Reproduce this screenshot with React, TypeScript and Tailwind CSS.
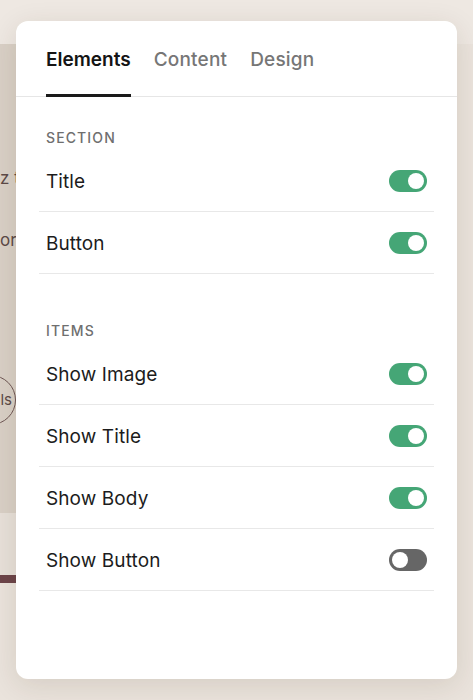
import { useState } from 'react';

type Row = { id: string; label: string; on: boolean };

const initialSections: { title: string; rows: Row[] }[] = [
  {
    title: 'Section',
    rows: [
      { id: 'title', label: 'Title', on: true },
      { id: 'button', label: 'Button', on: true },
    ],
  },
  {
    title: 'Items',
    rows: [
      { id: 'showImage', label: 'Show Image', on: true },
      { id: 'showTitle', label: 'Show Title', on: true },
      { id: 'showBody', label: 'Show Body', on: true },
      { id: 'showButton', label: 'Show Button', on: false },
    ],
  },
];

function Toggle({ on, onClick }: { on: boolean; onClick: () => void }) {
  return (
    <button
      type="button"
      onClick={onClick}
      className={`flex h-[22px] w-[38px] items-center rounded-full px-[3px] ${
        on ? 'justify-end bg-[#45a676]' : 'justify-start bg-[#666666]'
      }`}
    >
      <span className="block h-[16px] w-[16px] rounded-full bg-white" />
    </button>
  );
}

export default function App() {
  const [tab, setTab] = useState('Elements');
  const [sections, setSections] = useState(initialSections);

  function toggle(id: string) {
    setSections((prev) =>
      prev.map((s) => ({
        ...s,
        rows: s.rows.map((r) => (r.id === id ? { ...r, on: !r.on } : r)),
      }))
    );
  }

  return (
    <div
      className="relative h-[700px] w-[473px] overflow-hidden bg-[#eae3dc]"
      style={{ fontFamily: 'Inter, "Noto Sans", sans-serif' }}
    >
      {/* page behind the panel */}
      <div className="flex flex-col">
        <div className="h-[44px] bg-[#eee8e2]" />
        <div className="flex h-[469px] w-[200px] flex-col bg-[#d9d0c6] text-[17px] text-[#5c4a48]">
          <div className="mt-[122px] leading-[24px]">z t</div>
          <div className="mt-[38px] leading-[24px]">or</div>
          <div className="ml-[-40px] mt-[123px] flex h-[50px] w-[56px] items-center justify-end rounded-full border border-[#6e5654] pr-[3px] text-[15px]">
            ls
          </div>
        </div>
        <div className="h-[62px] w-[200px] bg-[#e7e0d9]" />
        <div className="h-[8px] w-[200px] bg-[#6c4449]" />
      </div>

      {/* settings panel */}
      <div className="absolute left-[16px] top-[21px] flex h-[658px] w-[441px] flex-col rounded-[12px] bg-white shadow-[0_6px_28px_rgba(60,40,20,0.12)]">
        <div className="flex gap-[23px] border-b border-[#e6e6e6] px-[30px]">
          {['Elements', 'Content', 'Design'].map((t) => (
            <button
              key={t}
              type="button"
              onClick={() => setTab(t)}
              className={`-mb-px pb-[21px] pt-[26px] text-[19px] leading-[26px] ${
                tab === t
                  ? 'border-b-[3px] border-[#1a1a1a] font-semibold text-[#141414]'
                  : 'border-b-[3px] border-transparent font-medium tracking-[0.01em] text-[#767676]'
              }`}
            >
              {t}
            </button>
          ))}
        </div>

        <div className="flex flex-col px-[23px]">
          {sections.map((s, i) => (
            <div key={s.title} className={i === 0 ? 'mt-[33px]' : 'mt-[49px]'}>
              <div className="mb-[4px] px-[7px] text-[14px] font-medium uppercase leading-[16px] tracking-[0.08em] text-[#6f6f6f]">
                {s.title}
              </div>
              {s.rows.map((r) => (
                <div
                  key={r.id}
                  className="flex h-[62px] items-center justify-between border-b border-[#e8e8e8] px-[7px]"
                >
                  <span className="pt-[3px] text-[19px] leading-[26px] tracking-[0.005em] text-[#1c1c1c]">
                    {r.label}
                  </span>
                  <Toggle on={r.on} onClick={() => toggle(r.id)} />
                </div>
              ))}
            </div>
          ))}
        </div>
      </div>
    </div>
  );
}
